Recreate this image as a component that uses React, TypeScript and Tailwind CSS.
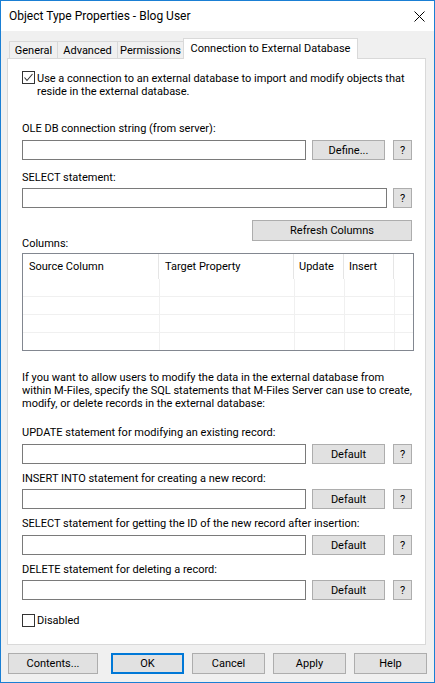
import React from "react";

function Btn({ children, className = "" }: { children?: React.ReactNode; className?: string }) {
  return (
    <div className={`h-[20px] bg-[#e1e1e1] border border-[#adadad] flex items-center justify-center shrink-0 ${className}`}>
      {children}
    </div>
  );
}

function Input() {
  return <div className="h-[20px] bg-white border border-[#7a7a7a] flex-1" />;
}

function Check({ checked = false }: { checked?: boolean }) {
  return (
    <div className="w-[13px] h-[13px] border border-[#333333] bg-white shrink-0 relative">
      {checked && (
        <svg className="absolute left-0 top-0" width="11" height="11" viewBox="0 0 11 11">
          <path d="M1.5 5.5 L4 8.5 L9.5 2" fill="none" stroke="#333333" strokeWidth="1.1" />
        </svg>
      )}
    </div>
  );
}

function StmtRow() {
  return (
    <div className="flex">
      <Input />
      <Btn className="w-[73px] ml-[6px]">Default</Btn>
      <Btn className="w-[19px] ml-[8px]">?</Btn>
    </div>
  );
}

function ListRow() {
  return (
    <div className="flex h-[18px] shrink-0 border-b border-[#f0f0f0]">
      <div className="w-[137px] border-r border-[#f0f0f0]" />
      <div className="w-[135px] border-r border-[#f0f0f0]" />
      <div className="w-[50px] border-r border-[#f0f0f0]" />
      <div className="w-[50px] border-r border-[#f0f0f0]" />
    </div>
  );
}

export default function App() {
  return (
    <div className="w-[435px] h-[683px] border border-[#1a7fd4] bg-[#f0f0f0] flex flex-col text-black text-[11px] leading-[13px] font-[family-name:Roboto,sans-serif]">
      <div className="h-[30px] bg-white flex items-center shrink-0">
        <span className="pl-[8px] text-[12px] leading-[16px]">Object Type Properties - Blog User</span>
        <svg className="ml-auto mr-[9px]" width="11" height="11" viewBox="0 0 11 11">
          <path d="M0.5 0.5 L10.5 10.5 M10.5 0.5 L0.5 10.5" stroke="#000000" strokeWidth="1" />
        </svg>
      </div>

      <div className="flex-1 flex flex-col pt-[7px] pb-[8px]">
        <div className="pl-[6px] pr-[8px] flex flex-col flex-1">
          <div className="flex items-end h-[21px] relative z-10 -mb-px pl-[2px]">
            <div className="w-[49px] h-[18px] border border-[#d9d9d9] bg-[#f0f0f0] flex items-center justify-center">General</div>
            <div className="w-[61px] h-[18px] -ml-px border border-[#d9d9d9] bg-[#f0f0f0] flex items-center justify-center">Advanced</div>
            <div className="w-[67px] h-[18px] -ml-px border border-[#d9d9d9] bg-[#f0f0f0] flex items-center justify-center">Permissions</div>
            <div className="w-[175px] h-[21px] -ml-px border border-b-0 border-[#d9d9d9] bg-white flex items-center justify-center pb-[1px]">Connection to External Database</div>
          </div>

          <div className="flex-1 bg-white border border-[#d9d9d9] pl-[14px] pr-[13px] flex flex-col">
            <div className="flex mt-[13px]">
              <div className="-mt-px">
                <Check checked />
              </div>
              <div className="ml-[2px] whitespace-nowrap">
                Use a connection to an external database to import and modify objects that
                <br />
                reside in the external database.
              </div>
            </div>

            <div className="mt-[24px]">OLE DB connection string (from server):</div>
            <div className="flex mt-[5px]">
              <Input />
              <Btn className="w-[73px] ml-[6px]">Define...</Btn>
              <Btn className="w-[19px] ml-[8px]">?</Btn>
            </div>

            <div className="mt-[11px]">SELECT statement:</div>
            <div className="flex mt-[4px]">
              <Input />
              <Btn className="w-[19px] ml-[6px]">?</Btn>
            </div>

            <div className="flex justify-between h-[30px] mt-[12px]">
              <div className="self-end">Columns:</div>
              <Btn className="w-[160px] h-[21px] self-start">Refresh Columns</Btn>
            </div>

            <div className="mt-[3px] -mr-[2px] h-[98px] shrink-0 border border-[#828790] bg-white flex flex-col overflow-hidden">
              <div className="flex h-[25px] shrink-0">
                <div className="w-[136px] border-r border-[#e5e5e5] pl-[6px] flex items-center">Source Column</div>
                <div className="w-[135px] border-r border-[#e5e5e5] pl-[6px] flex items-center">Target Property</div>
                <div className="w-[50px] border-r border-[#e5e5e5] pl-[5px] flex items-center">Update</div>
                <div className="w-[50px] border-r border-[#e5e5e5] pl-[5px] flex items-center">Insert</div>
              </div>
              <ListRow />
              <ListRow />
              <ListRow />
              <ListRow />
            </div>

            <div className="mt-[20px] whitespace-nowrap">
              If you want to allow users to modify the data in the external database from
              <br />
              within M-Files, specify the SQL statements that M-Files Server can use to create,
              <br />
              modify, or delete records in the external database:
            </div>

            <div className="mt-[16px]">UPDATE statement for modifying an existing record:</div>
            <div className="mt-[5px]">
              <StmtRow />
            </div>

            <div className="mt-[8px]">INSERT INTO statement for creating a new record:</div>
            <div className="mt-[4px]">
              <StmtRow />
            </div>

            <div className="mt-[8px]">SELECT statement for getting the ID of the new record after insertion:</div>
            <div className="mt-[5px]">
              <StmtRow />
            </div>

            <div className="mt-[8px]">DELETE statement for deleting a record:</div>
            <div className="mt-[4px]">
              <StmtRow />
            </div>

            <div className="flex items-center mt-[14px]">
              <Check />
              <div className="ml-[2px]">Disabled</div>
            </div>
          </div>
        </div>

        <div className="flex h-[21px] mt-[8px] pl-[7px] shrink-0">
          <Btn className="w-[90px] h-[21px]">Contents...</Btn>
          <div className="w-[73px] h-[21px] ml-[13px] bg-[#e1e1e1] border-2 border-[#0078d7] flex items-center justify-center">OK</div>
          <Btn className="w-[73px] h-[21px] ml-[8px]">Cancel</Btn>
          <Btn className="w-[73px] h-[21px] ml-[8px]">Apply</Btn>
          <Btn className="w-[73px] h-[21px] ml-[8px]">Help</Btn>
        </div>
      </div>
    </div>
  );
}
